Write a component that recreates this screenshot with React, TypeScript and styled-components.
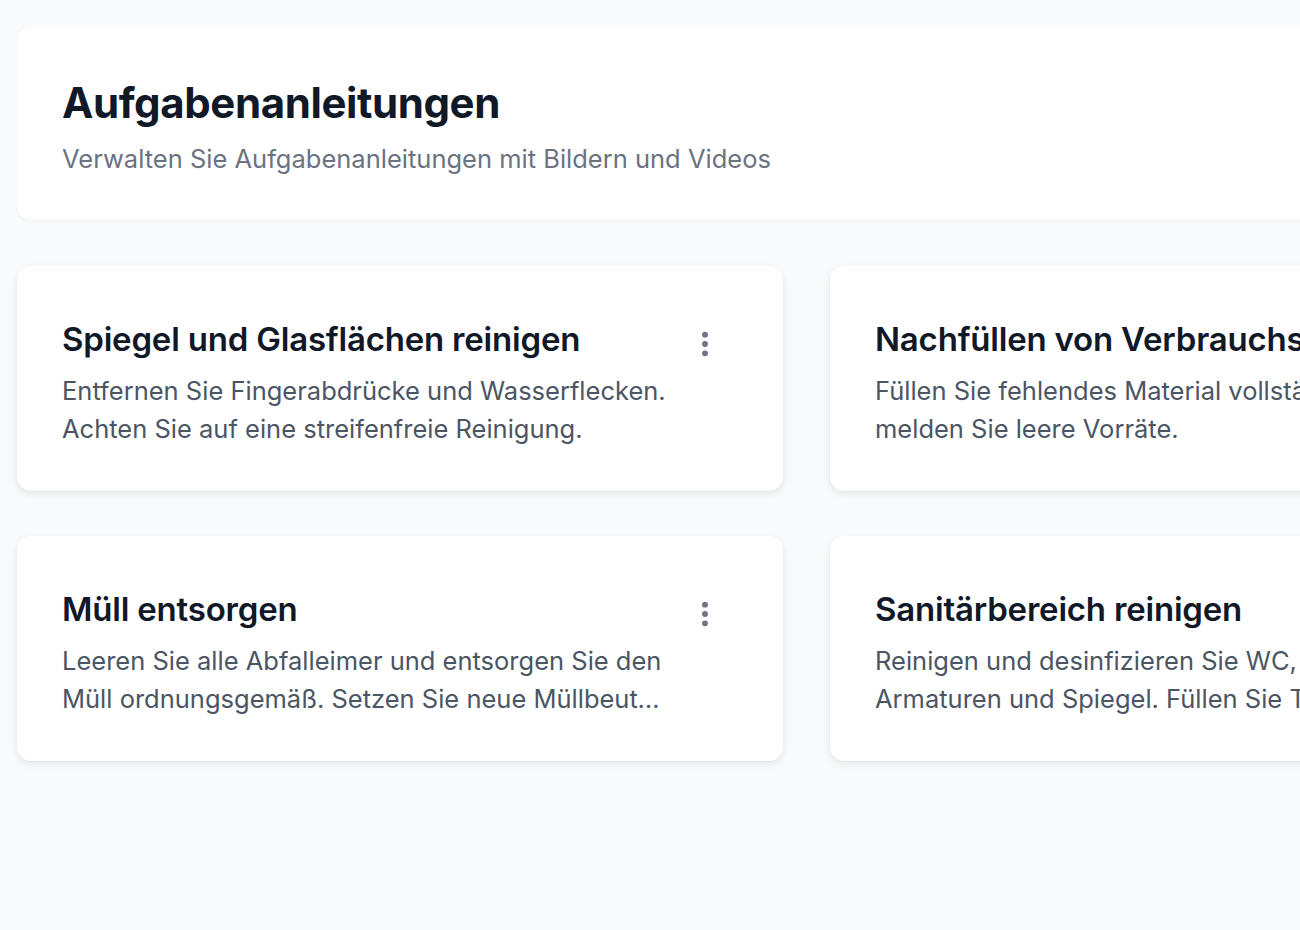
import React from "react";
import styled, { createGlobalStyle } from "styled-components";
import { EllipsisVertical } from "lucide-react";

const Colors = {
  page: "#f9fafb",
  white: "#ffffff",
  title: "#111827",
  text: "#4b5563",
  muted: "#6b7280",
};

const GlobalStyle = createGlobalStyle`
  html, body {
    margin: 0;
    padding: 0;
    background: ${Colors.page};
    overflow: hidden;
  }
  body {
    font-family: Inter, "Noto Sans", "DejaVu Sans", sans-serif;
    -webkit-font-smoothing: antialiased;
  }
`;

interface Guide {
  title: string;
  description: string;
}

const guides: Guide[] = [
  {
    title: "Spiegel und Glasflächen reinigen",
    description:
      "Entfernen Sie Fingerabdrücke und Wasserflecken. Achten Sie auf eine streifenfreie Reinigung.",
  },
  {
    title: "Nachfüllen von Verbrauchsmaterial",
    description:
      "Füllen Sie fehlendes Material vollständig auf und melden Sie leere Vorräte.",
  },
  {
    title: "Müll entsorgen",
    description:
      "Leeren Sie alle Abfalleimer und entsorgen Sie den Müll ordnungsgemäß. Setzen Sie neue Müllbeutel ein.",
  },
  {
    title: "Sanitärbereich reinigen",
    description:
      "Reinigen und desinfizieren Sie WC, Dusche, Armaturen und Spiegel. Füllen Sie Toilettenpapier und Seife nach.",
  },
];

const Page = styled.div`
  width: 1700px;
  min-height: 930px;
  padding: 27px 0 0 17px;
  box-sizing: border-box;
  display: flex;
  flex-direction: column;
  gap: 46px;
`;

const HeaderCard = styled.header`
  background: ${Colors.white};
  border-radius: 14px;
  box-shadow: 0 1px 3px rgba(17, 24, 39, 0.05);
  padding: 49px 45px 42px;
  display: flex;
  flex-direction: column;
  gap: 10px;
`;

const PageTitle = styled.h1`
  margin: 0;
  font-size: 42px;
  line-height: 54px;
  font-weight: 700;
  letter-spacing: -0.4px;
  color: ${Colors.title};
`;

const PageSubtitle = styled.p`
  margin: 0;
  font-size: 25.5px;
  line-height: 38px;
  color: ${Colors.muted};
`;

const Grid = styled.div`
  display: grid;
  grid-template-columns: repeat(2, 766px);
  gap: 45px 47px;
`;

const Card = styled.article`
  background: ${Colors.white};
  border-radius: 14px;
  box-shadow: 0 3px 8px rgba(17, 24, 39, 0.08), 0 1px 2px rgba(17, 24, 39, 0.04);
  padding: 43px 45px 43px;
  display: flex;
  flex-direction: column;
  gap: 3px;
  overflow: hidden;
`;

const CardHead = styled.div`
  display: flex;
  align-items: center;
  justify-content: space-between;
  gap: 16px;
`;

const CardTitle = styled.h2`
  margin: 0;
  font-size: 33px;
  line-height: 44px;
  font-weight: 600;
  letter-spacing: -0.2px;
  color: ${Colors.title};
  white-space: nowrap;
`;

const MenuButton = styled.button`
  flex-shrink: 0;
  display: flex;
  align-items: center;
  justify-content: center;
  width: 66px;
  height: 50px;
  margin-top: 10px;
  padding: 0;
  border: none;
  background: transparent;
  color: ${Colors.muted};
  cursor: pointer;
`;

const CardText = styled.p`
  margin: 0;
  max-width: 606px;
  font-size: 25.5px;
  line-height: 38px;
  color: ${Colors.text};
  display: -webkit-box;
  -webkit-line-clamp: 2;
  -webkit-box-orient: vertical;
  overflow: hidden;
`;

const GuideCard: React.FC<{ guide: Guide }> = ({ guide }) => {
  return (
    <Card>
      <CardHead>
        <CardTitle>{guide.title}</CardTitle>
        <MenuButton aria-label="Mehr">
          <EllipsisVertical size={32} strokeWidth={2.4} />
        </MenuButton>
      </CardHead>
      <CardText>{guide.description}</CardText>
    </Card>
  );
};

export default function App() {
  return (
    <>
      <GlobalStyle />
      <Page>
        <HeaderCard>
          <PageTitle>Aufgabenanleitungen</PageTitle>
          <PageSubtitle>Verwalten Sie Aufgabenanleitungen mit Bildern und Videos</PageSubtitle>
        </HeaderCard>
        <Grid>
          {guides.map((g) => (
            <GuideCard key={g.title} guide={g} />
          ))}
        </Grid>
      </Page>
    </>
  );
}
